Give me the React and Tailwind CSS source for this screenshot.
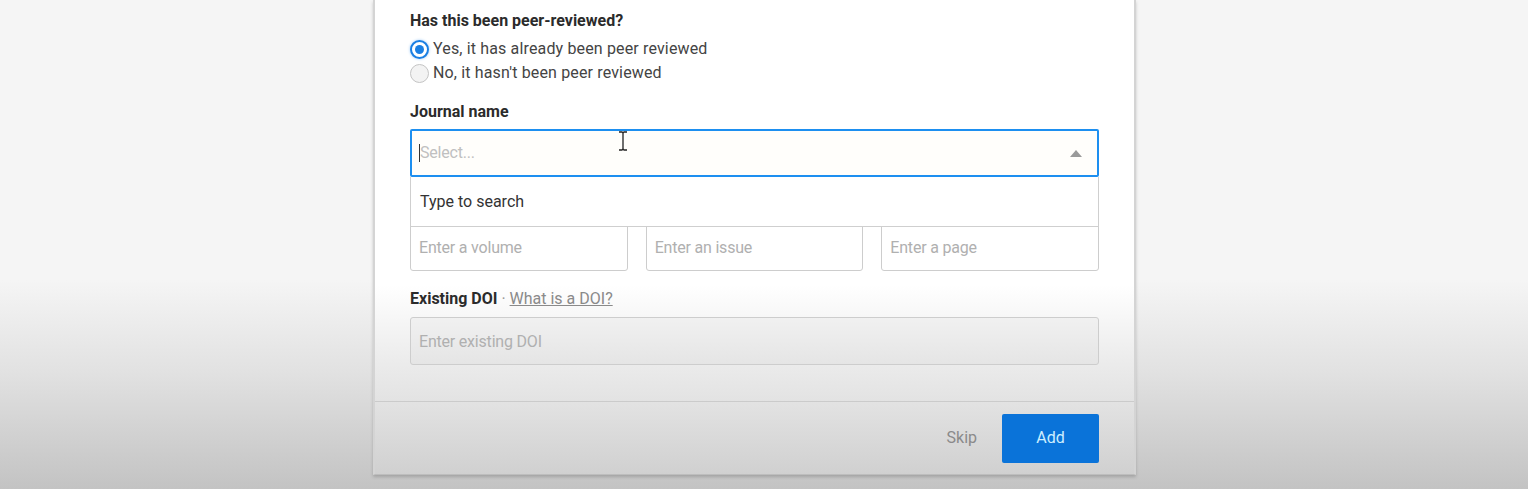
import React, { useState } from 'react';

const font = { fontFamily: 'Roboto, "Liberation Sans", sans-serif' };

const Radio = ({ checked, label, onClick }) => (
  <label onClick={onClick} className="flex items-center h-[24px] cursor-pointer">
    {checked ? (
      <span className="w-[19px] h-[19px] rounded-full border-2 border-[#1a7fe3] bg-white flex items-center justify-center shadow-[0_0_3px_#9cc8f5]">
        <span className="w-[9px] h-[9px] rounded-full bg-[#1a7fe3]" />
      </span>
    ) : (
      <span className="w-[19px] h-[19px] rounded-full border border-[#c4c4c4] bg-[#f3f3f3]" />
    )}
    <span className="ml-[4px] text-[16px] tracking-[0.15px] text-[#444]">{label}</span>
  </label>
);

const TextInput = ({ placeholder, dim }) => (
  <input
    type="text"
    placeholder={placeholder}
    className={
      'w-full h-[48px] px-[8px] border border-[#cdcdcd] rounded-[3px] text-[16px] tracking-[-0.2px] text-[#333] placeholder:text-[#b0b0b0] outline-none ' +
      (dim ? 'bg-black/[0.025]' : 'bg-transparent')
    }
  />
);

export default function App() {
  const [reviewed, setReviewed] = useState(true);

  return (
    <div
      style={font}
      className="h-[489px] overflow-hidden bg-[linear-gradient(to_bottom,#f5f5f5_0,#f5f5f5_280px,#e2e2e2_370px,#c3c3c3_489px)]"
    >
      <div className="ml-[373px] w-[763px] h-[475px] flex flex-col border-x-2 border-[#d4d4d4] border-b border-b-[#bdbdbd] shadow-[0_2px_3px_rgba(0,0,0,0.18)] bg-[linear-gradient(to_bottom,#ffffff_0,#ffffff_285px,#ececec_360px,#e3e3e3_400px,#d0d0d0_475px)]">
        <div className="flex-1 px-[35px] pt-[11px]">
          <div className="text-[16px] leading-[20px] font-bold text-[#2b2b2b]">Has this been peer-reviewed?</div>
          <div className="mt-[6px] flex flex-col">
            <Radio checked={reviewed} onClick={() => setReviewed(true)} label="Yes, it has already been peer reviewed" />
            <Radio checked={!reviewed} onClick={() => setReviewed(false)} label="No, it hasn't been peer reviewed" />
          </div>

          <div className="mt-[17px] text-[16px] leading-[20px] font-bold text-[#2b2b2b]">Journal name</div>
          <div className="relative mt-[7px]">
            <div className="h-[48px] flex items-center border-2 border-[#1d8ff0] rounded-[2px] bg-[#fffefb] pl-[7px] pr-[15px]">
              <span className="w-[1px] h-[18px] bg-[#333]" />
              <span className="flex-1 text-[16px] tracking-[-0.2px] text-[#c0c0c0]">Select...</span>
              <svg width="12" height="7" viewBox="0 0 12 7">
                <path d="M0 7 L6 0 L12 7 Z" fill="#9a9a9a" />
              </svg>
            </div>
            <svg className="absolute left-[208px] top-[2px]" width="10" height="20" viewBox="0 0 10 20">
              <path d="M1 1 H4 Q5 1 5 3 V17 Q5 19 4 19 H1 M9 1 H6 Q5 1 5 3 M9 19 H6 Q5 19 5 17" stroke="#222" strokeWidth="1.3" fill="none" />
            </svg>
            <div className="absolute z-10 left-0 right-0 top-full h-[50px] flex items-center px-[9px] bg-white border border-t-0 border-[#cfcfcf] text-[16px] text-[#333]">
              Type to search
            </div>
          </div>

          {/* volume / issue / page labels sit under the open dropdown */}
          <div className="mt-[46px] grid grid-cols-3 gap-[18px]">
            <TextInput placeholder="Enter a volume" />
            <TextInput placeholder="Enter an issue" />
            <TextInput placeholder="Enter a page" />
          </div>

          <div className="mt-[18px] text-[16px] leading-[20px] text-[#2b2b2b]">
            <span className="font-bold">Existing DOI</span>
            <span className="text-[#999]"> · </span>
            <a href="#" className="text-[#8a8a8a] underline">What is a DOI?</a>
          </div>
          <div className="mt-[8px]"><TextInput dim placeholder="Enter existing DOI" /></div>
        </div>

        <div className="h-[73px] border-t border-[#cbcbcb] flex items-center justify-end px-[35px] gap-[25px]">
          <button className="text-[16px] text-[#8a8a8a]">Skip</button>
          <button className="w-[97px] h-[49px] rounded-[2px] bg-[#0a73d9] text-[16px] text-[#cdeeff]">Add</button>
        </div>
      </div>
    </div>
  );
}
